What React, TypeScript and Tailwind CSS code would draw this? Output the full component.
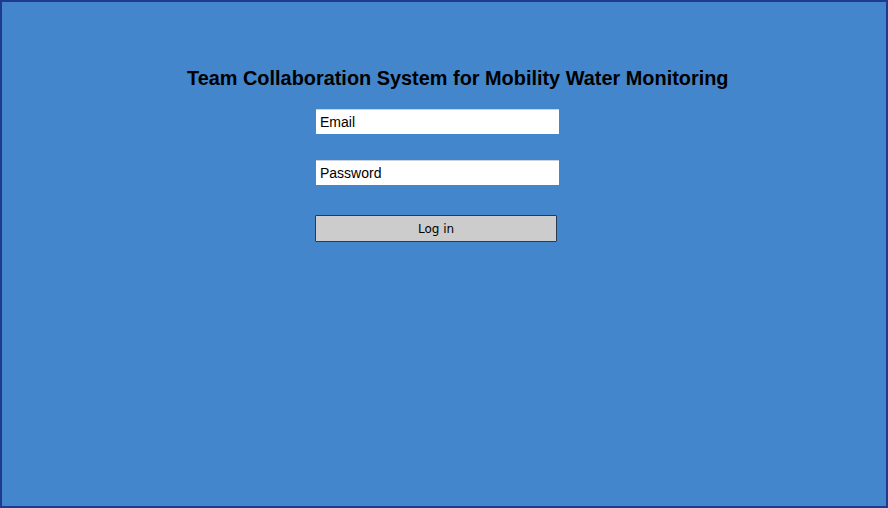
export default function App() {
  return (
    <div className="w-[888px] h-[508px] bg-[#4386cc] border-2 border-[#1e3a8f] font-['Liberation_Sans',Arial,sans-serif] text-black">
      <h1 className="mt-[64px] ml-[185px] text-[19.9px] leading-[24px] font-bold">
        Team Collaboration System for Mobility Water Monitoring
      </h1>
      <div className="ml-[314px] mt-[19px] flex flex-col items-start">
        <div className="w-[243px] h-[25px] bg-white border-t border-[#c8d2de] pl-[4px] text-[14px] leading-[24px]">
          Email
        </div>
        <div className="mt-[26px] w-[243px] h-[25px] bg-white border-t border-[#c8d2de] pl-[4px] text-[14px] leading-[24px]">
          Password
        </div>
        <button className="-ml-px mt-[30px] w-[242px] h-[27px] bg-[#cccccc] border border-[#2b3a4d] rounded-[1px] text-[12px] font-['DejaVu_Sans',sans-serif] flex items-center justify-center">
          Log in
        </button>
      </div>
    </div>
  );
}
